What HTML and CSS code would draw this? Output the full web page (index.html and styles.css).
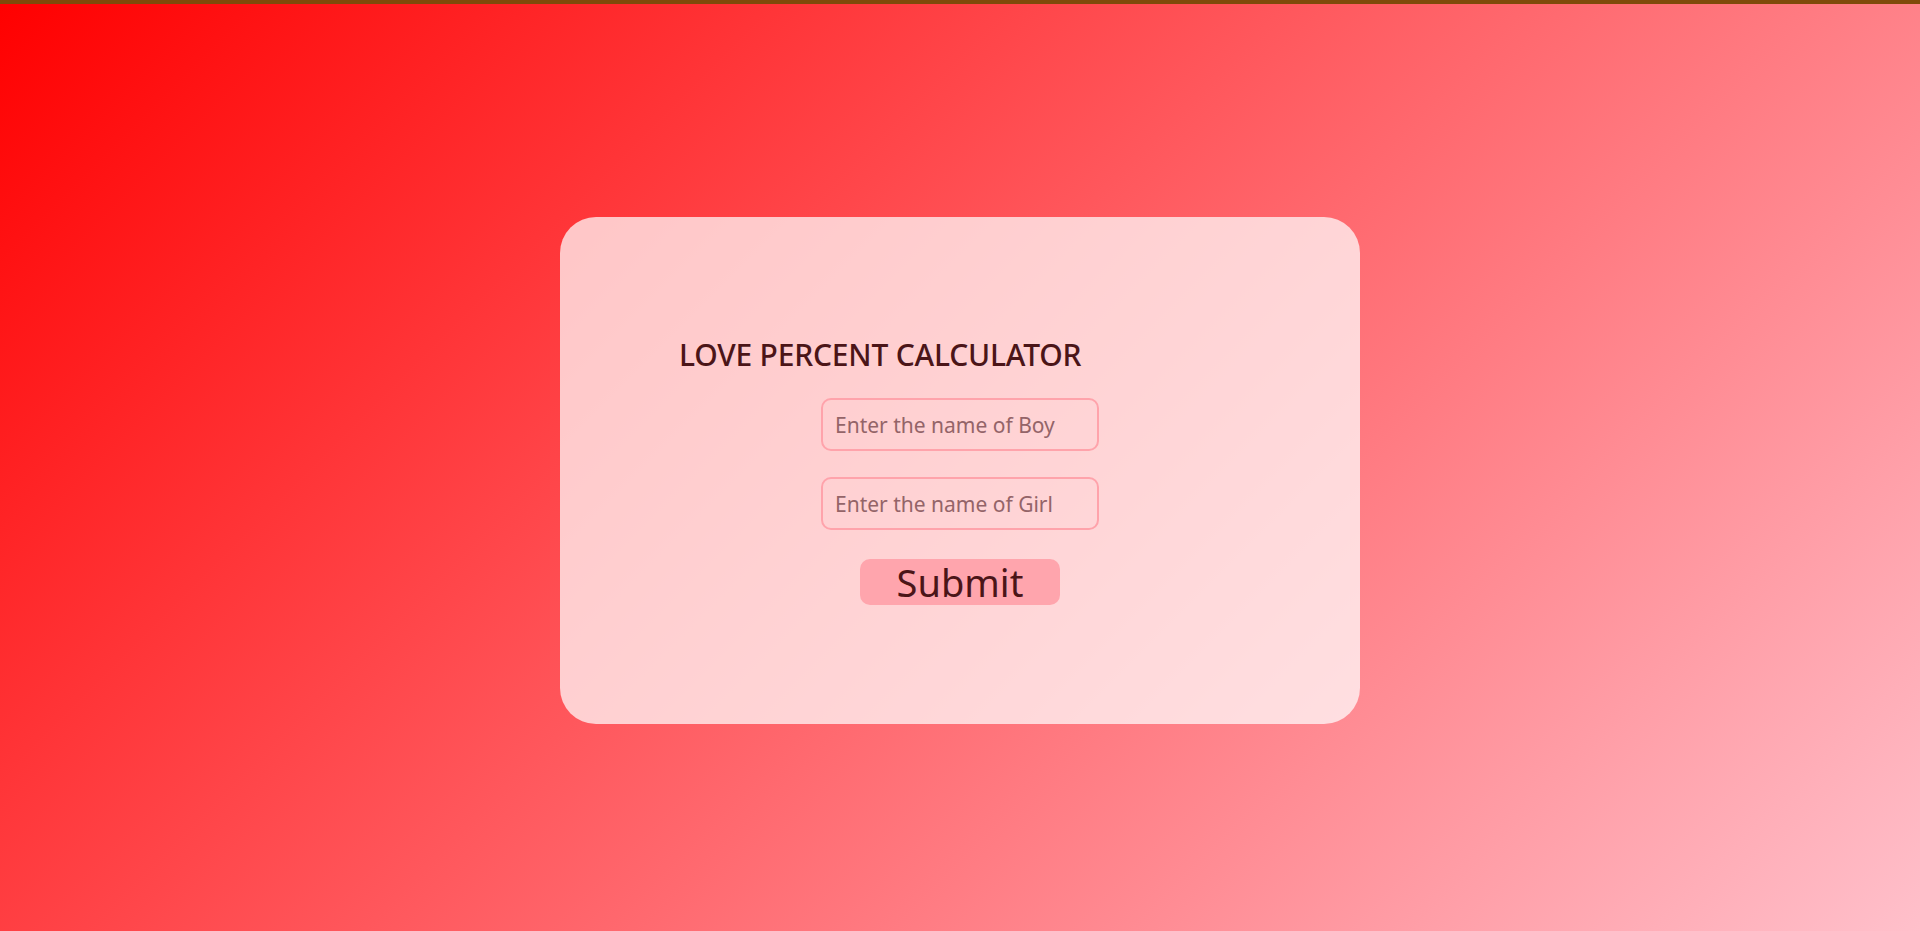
FILE: index.html
```html
<!DOCTYPE html>
<html lang="en">
<head>
<meta charset="UTF-8">
<title>Love Percent Calculator</title>
<link rel="stylesheet" href="styles.css">
</head>
<body>
<main class="page">
  <section class="card">
    <h1 class="title">LOVE PERCENT CALCULATOR</h1>
    <form class="form">
      <input class="field" type="text" placeholder="Enter the name of Boy">
      <input class="field" type="text" placeholder="Enter the name of Girl">
      <button class="submit" type="button">Submit</button>
    </form>
  </section>
</main>
</body>
</html>
```

FILE: styles.css
```css
html, body {
  margin: 0;
  padding: 0;
}

body {
  border-top: 4px solid #7f4a0a;
  font-family: "Noto Sans", "Open Sans", sans-serif;
  background: linear-gradient(135deg, #ff0000 0%, #ffc0cb 100%);
  min-height: 927px;
  box-sizing: border-box;
}

.page {
  height: 927px;
  display: flex;
  align-items: center;
  justify-content: center;
}

.card {
  width: 800px;
  height: 507px;
  box-sizing: border-box;
  margin-top: 6px;
  padding-top: 123px;
  border-radius: 36px;
  background: rgba(255, 255, 255, 0.72);
  display: flex;
  flex-direction: column;
}

.title {
  margin: 0 0 28px 119px;
  font-size: 30px;
  line-height: 30px;
  font-weight: 500;
  color: #4b1518;
  letter-spacing: -0.2px;
}

.form {
  display: flex;
  flex-direction: column;
  align-items: center;
  margin: 0;
}

.field {
  width: 278px;
  height: 53px;
  box-sizing: border-box;
  border: 2px solid #ffa3ab;
  border-radius: 10px;
  background: transparent;
  padding: 0 12px;
  font-family: inherit;
  font-size: 21px;
  color: #4b1518;
  margin-bottom: 26px;
  outline: none;
}

.field + .field {
  margin-bottom: 29px;
}

.field::placeholder {
  color: #946468;
}

.submit {
  width: 200px;
  height: 46px;
  border: none;
  border-radius: 10px;
  background: #ffa5ad;
  color: #4b1518;
  font-family: inherit;
  font-size: 38px;
  line-height: 46px;
  padding: 0;
}
```
